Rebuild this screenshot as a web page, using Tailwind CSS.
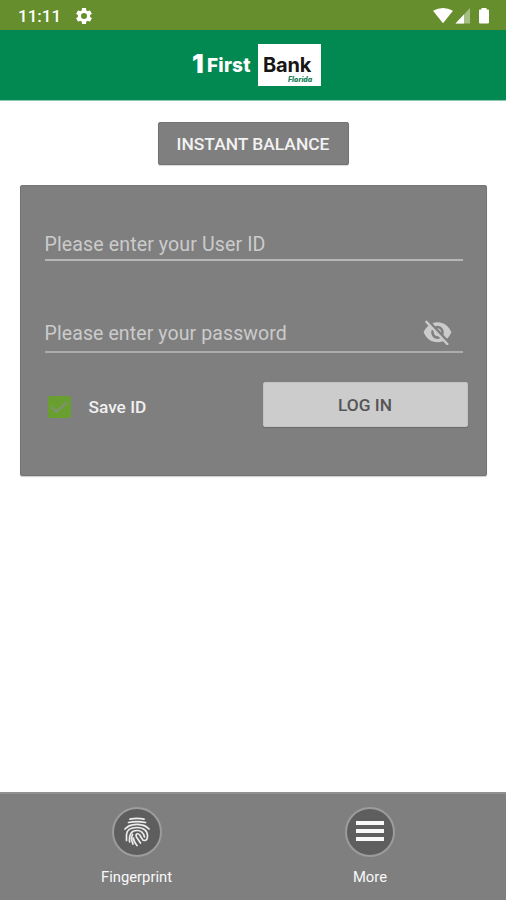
<!DOCTYPE html>
<html lang="en">
<head>
<meta charset="utf-8">
<title>1First Bank</title>
<script src="https://cdn.jsdelivr.net/npm/@tailwindcss/browser@4"></script>
</head>
<body class="w-[506px] h-[900px] bg-white font-['Roboto',sans-serif] overflow-hidden flex flex-col">
  <div class="h-[30px] shrink-0 bg-[#668e2c] flex items-center pl-[18px] pr-[15px] text-white">
    <span class="text-[17px] leading-[30px] font-medium pt-[1px] w-[43px]">11:11</span>
    <svg class="ml-[13px] mt-[1px] w-[20px] h-[20px]" viewBox="0 0 24 24" fill="#fff"><path d="M19.14 12.94c.04-.3.06-.61.06-.94 0-.32-.02-.64-.07-.94l2.03-1.58a.49.49 0 0 0 .12-.61l-1.92-3.32a.49.49 0 0 0-.59-.22l-2.39.96a7 7 0 0 0-1.62-.94l-.36-2.54a.48.48 0 0 0-.48-.41h-3.84a.47.47 0 0 0-.47.41l-.36 2.54c-.59.24-1.13.57-1.62.94l-2.39-.96a.48.48 0 0 0-.59.22L2.74 8.87a.47.47 0 0 0 .12.61l2.03 1.58c-.05.3-.09.63-.09.94s.02.64.07.94l-2.03 1.58a.49.49 0 0 0-.12.61l1.92 3.32c.12.22.37.29.59.22l2.39-.96c.5.38 1.03.7 1.62.94l.36 2.54c.05.24.24.41.48.41h3.84c.24 0 .44-.17.47-.41l.36-2.54c.59-.24 1.13-.56 1.62-.94l2.39.96c.22.08.47 0 .59-.22l1.92-3.32a.47.47 0 0 0-.12-.61l-2.01-1.58zM12 15.6A3.6 3.6 0 1 1 12 8.400a3.6 3.6 0 0 1 0 7.200z"/></svg>
    <svg class="ml-auto mt-[1px] w-[58px] h-[18px]" viewBox="0 0 58 18"><path d="M0 3.800Q10 -1.800 20 3.800L10 16.200Z" fill="#fff"/><path d="M37 1v15.500H22.500Z" fill="#a6bd83"/><path d="M31 7.400v9.100h-8.500Z" fill="#fff"/><path d="M48.500 1h5v1.500h1.500q1 0 1 1v12q0 1-1 1h-8q-1 0-1-1v-12q0-1 1-1h1.500z" fill="#fff"/></svg>
  </div>
  <header class="h-[71px] shrink-0 bg-[#028951] border-b border-[#8cc9ae] flex pt-[14px] pl-[192px] font-['Inter',sans-serif]">
    <span class="w-[15px] mt-[7px] text-white text-[26px] leading-[26px] font-black">1</span>
    <span class="w-[51px] mt-[10px] text-white text-[19px] leading-[24px] font-extrabold tracking-[0.2px]">First</span>
    <div class="w-[63px] h-[42px] bg-white flex flex-col pl-[5px] pt-[11px]">
      <span class="text-[20px] leading-[20px] font-bold text-[#161616] tracking-[-0.200px]">Bank</span>
      <span class="text-[7px] leading-[7px] mt-[1px] ml-[25px] font-extrabold italic text-[#14805a]">Florida</span>
    </div>
  </header>
  <main class="flex-1 px-[20px] pt-[21px] flex flex-col items-center">
    <button class="w-[191px] h-[43px] bg-[#7f7f7f] border border-[#727272] rounded-[2px] text-[#f2f2f2] text-[17.400px] font-medium whitespace-nowrap pt-[2px] shadow-[0_1px_1px_rgba(0,0,0,0.150)]">INSTANT BALANCE</button>
    <section class="mt-[20px] w-[467px] h-[291px] bg-[#7f7f7f] border border-[#757575] rounded-[2px] shadow-[0_1px_1px_rgba(0,0,0,0.200)] px-[24px]">
      <div class="h-[75px] border-b-2 border-[#b6b6b6] w-[418px] flex items-end pb-[3px] text-[19.600px] leading-[23px] tracking-[0.1px] text-[#cbcbcb]">Please enter your User ID</div>
      <div class="h-[92px] border-b-2 border-[#acacac] w-[418px] flex items-end justify-between pb-[6px] pr-[11px] text-[19.500px] leading-[23px] tracking-[0.1px] text-[#cbcbcb]">Please enter your password
        <svg class="w-[29px] h-[26px]" viewBox="0.500 2.000 23 19.500" preserveAspectRatio="none" fill="#cbcbcb"><path d="M12 7c2.760 0 5 2.240 5 5 0 .650-.130 1.260-.360 1.830l2.920 2.920c1.510-1.260 2.700-2.890 3.430-4.750-1.730-4.390-6-7.500-11-7.500-1.400 0-2.740.250-3.980.700l2.160 2.160C10.740 7.130 11.350 7 12 7zM2 4.270l2.280 2.280.460.460C3.080 8.300 1.780 10.020 1 12c1.730 4.390 6 7.500 11 7.500 1.550 0 3.030-.300 4.380-.840l.420.420L19.730 22 21 20.730 3.270 3 2 4.270zM7.530 9.800l1.550 1.550c-.050.210-.080.430-.080.650 0 1.660 1.340 3 3 3 .220 0 .440-.030.650-.080l1.550 1.550c-.670.330-1.410.530-2.200.530-2.760 0-5-2.240-5-5 0-.790.200-1.530.530-2.200zm4.310-.780 3.150 3.150.020-.160c0-1.660-1.340-3-3-3l-.170.010z"/></svg>
      </div>
      <div class="flex pt-[29px] pl-[3px] w-[423px]">
        <svg class="w-[23px] h-[22px] mt-[14px] shrink-0" viewBox="0 0 22 22" preserveAspectRatio="none"><rect width="22" height="22" rx="2" fill="#689f2f"/><path d="M3.500 11l4.800 4.800L18.500 5.800" fill="none" stroke="#80907a" stroke-width="2"/></svg>
        <span class="ml-[18px] mt-[13px] flex-1 text-[17.300px] leading-[24px] text-[#f0f0f0] font-medium">Save ID</span>
        <button class="w-[205px] h-[45px] shrink-0 bg-[#cccccc] border border-[#c2c2c2] rounded-[2px] text-[#555] text-[17.300px] font-medium pt-[3px] shadow-[0_1px_1px_rgba(0,0,0,0.150)]">LOG IN</button>
      </div>
    </section>
  </main>
  <nav class="h-[108px] shrink-0 bg-[#7f7f7f] border-t-2 border-[#919191] flex pl-[20px] pt-[13px] text-[#f8f8f8]">
    <div class="w-[233px] flex flex-col items-center">
      <div class="w-[50px] h-[50px] rounded-full bg-[#5e5e5e] border-2 border-[#9c9c9c] flex items-center justify-center">
        <svg class="w-[26px] h-[30px]" viewBox="0 0 26 30" fill="none" stroke="#ececec" stroke-width="1.700" stroke-linecap="round" stroke-linejoin="round"><path d="M6 2.200Q13 .700 20 2.200M4.500 5.500Q13 3.800 21.500 5.500M1 12Q4.500 8.200 8.500 7.800Q13 7 17.500 7.800Q21.500 8.200 25 12M2.500 23.500V17.500Q3 10.500 13 10.500C20 10.500 23.500 14 23.500 19Q23.500 23.500 20.500 23.500Q18.500 23.500 17.500 21L15.800 18Q14.200 16.200 12.800 17Q11.300 18 12.800 20.500L16.500 26M5.600 25Q4.500 13.500 13 13.500Q19 13.500 20.500 20M9 27Q6.500 22 8.500 17.500M13 28.500Q9.500 24 9.500 21"/></svg>
      </div>
      <span class="mt-[9px] leading-[22px] text-[14.800px]">Fingerprint</span>
    </div>
    <div class="w-[234px] flex flex-col items-center">
      <div class="w-[50px] h-[50px] rounded-full bg-[#5e5e5e] border-2 border-[#9c9c9c] flex flex-col items-center justify-center gap-[4px] pb-[2px]">
        <span class="w-[28px] h-[4px] bg-[#f8f8f8]"></span><span class="w-[28px] h-[4px] bg-[#f8f8f8]"></span><span class="w-[28px] h-[4px] bg-[#f8f8f8]"></span>
      </div>
      <span class="mt-[9px] leading-[22px] text-[14.800px]">More</span>
    </div>
  </nav>
</body>
</html>
